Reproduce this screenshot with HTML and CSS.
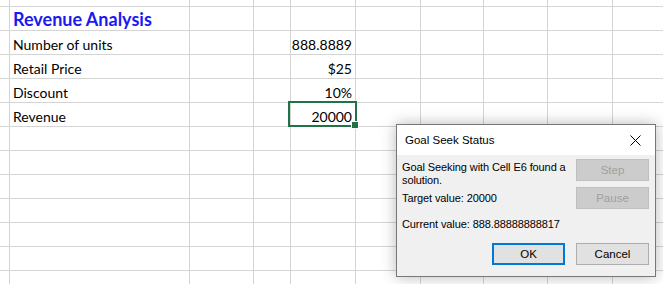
FILE: index.html
```html
<!DOCTYPE html>
<html lang="en">
<head>
    <meta charset="UTF-8">
    <title>Revenue Analysis - Goal Seek</title>
    <link rel="stylesheet" href="styles.css">
</head>
<body>
    <div class="sheet">
        <!-- row 0 (partial) -->
        <div class="cell"></div><div class="cell"></div><div class="cell"></div><div class="cell"></div><div class="cell"></div><div class="cell"></div><div class="cell"></div><div class="cell"></div><div class="cell"></div><div class="cell"></div>
        <!-- row 1 -->
        <div class="cell"></div><div class="cell title">Revenue Analysis</div><div class="cell"></div><div class="cell"></div><div class="cell"></div><div class="cell"></div><div class="cell"></div><div class="cell"></div><div class="cell"></div><div class="cell"></div>
        <!-- row 2 -->
        <div class="cell"></div><div class="cell">Number of units</div><div class="cell"></div><div class="cell"></div><div class="cell num">888.8889</div><div class="cell"></div><div class="cell"></div><div class="cell"></div><div class="cell"></div><div class="cell"></div>
        <!-- row 3 -->
        <div class="cell"></div><div class="cell">Retail Price</div><div class="cell"></div><div class="cell"></div><div class="cell num">$25</div><div class="cell"></div><div class="cell"></div><div class="cell"></div><div class="cell"></div><div class="cell"></div>
        <!-- row 4 -->
        <div class="cell"></div><div class="cell">Discount</div><div class="cell"></div><div class="cell"></div><div class="cell num">10%</div><div class="cell"></div><div class="cell"></div><div class="cell"></div><div class="cell"></div><div class="cell"></div>
        <!-- row 5 -->
        <div class="cell"></div><div class="cell">Revenue</div><div class="cell"></div><div class="cell"></div><div class="cell num active">20000<span class="selection"><span class="handle"></span></span></div><div class="cell"></div><div class="cell"></div><div class="cell"></div><div class="cell"></div><div class="cell"></div>
        <!-- empty rows -->
        <div class="cell"></div><div class="cell"></div><div class="cell"></div><div class="cell"></div><div class="cell"></div><div class="cell"></div><div class="cell"></div><div class="cell"></div><div class="cell"></div><div class="cell"></div>
        <div class="cell"></div><div class="cell"></div><div class="cell"></div><div class="cell"></div><div class="cell"></div><div class="cell"></div><div class="cell"></div><div class="cell"></div><div class="cell"></div><div class="cell"></div>
        <div class="cell"></div><div class="cell"></div><div class="cell"></div><div class="cell"></div><div class="cell"></div><div class="cell"></div><div class="cell"></div><div class="cell"></div><div class="cell"></div><div class="cell"></div>
        <div class="cell"></div><div class="cell"></div><div class="cell"></div><div class="cell"></div><div class="cell"></div><div class="cell"></div><div class="cell"></div><div class="cell"></div><div class="cell"></div><div class="cell"></div>
        <div class="cell"></div><div class="cell"></div><div class="cell"></div><div class="cell"></div><div class="cell"></div><div class="cell"></div><div class="cell"></div><div class="cell"></div><div class="cell"></div><div class="cell"></div>
        <div class="cell"></div><div class="cell"></div><div class="cell"></div><div class="cell"></div><div class="cell"></div><div class="cell"></div><div class="cell"></div><div class="cell"></div><div class="cell"></div><div class="cell"></div>
        <div class="cell"></div><div class="cell"></div><div class="cell"></div><div class="cell"></div><div class="cell"></div><div class="cell"></div><div class="cell"></div><div class="cell"></div><div class="cell"></div><div class="cell"></div>
    </div>

    <div class="dialog">
        <div class="dialog-title">
            <span>Goal Seek Status</span>
            <svg class="close" width="11" height="11" viewBox="0 0 11 11">
                <path d="M0.5 0.5 L10.5 10.5 M10.5 0.5 L0.5 10.5" stroke="#000" stroke-width="1" fill="none"/>
            </svg>
        </div>
        <div class="dialog-body">
            <div class="dialog-main">
                <div class="dialog-text">
                    <p>Goal Seeking with Cell E6 found a solution.</p>
                    <p class="target">Target value: 20000</p>
                    <p class="current">Current value: 888.88888888817</p>
                </div>
                <div class="side-buttons">
                    <button class="btn" disabled>Step</button>
                    <button class="btn" disabled>Pause</button>
                </div>
            </div>
            <div class="dialog-footer">
                <button class="btn default">OK</button>
                <button class="btn">Cancel</button>
            </div>
        </div>
    </div>
</body>
</html>
```

FILE: styles.css
```css
body {
    margin: 0;
    width: 663px;
    height: 284px;
    overflow: hidden;
    background: #fff;
    position: relative;
    font-family: Lato, "Open Sans", sans-serif;
}

.sheet {
    display: grid;
    grid-template-columns: 10px 180px 64px 37px 65px 65px 63px 64px 65px 60px;
    grid-template-rows: 7px repeat(12, 24px);
}

.cell {
    border-right: 1px solid #d4d4d4;
    border-bottom: 1px solid #d4d4d4;
    font-size: 14px;
    color: #000;
    padding: 0 3px 1px;
    display: flex;
    align-items: flex-end;
    white-space: nowrap;
    box-sizing: border-box;
}

.cell.title {
    font-size: 18px;
    font-weight: bold;
    color: #1a1af0;
    padding-bottom: 0;
}

.cell.num {
    justify-content: flex-end;
}

.cell.active {
    position: relative;
}

.selection {
    position: absolute;
    left: -3px;
    top: -2px;
    width: 69px;
    height: 26px;
    border: 2px solid #217346;
    box-sizing: border-box;
}

.handle {
    position: absolute;
    right: -4px;
    bottom: -4px;
    width: 6px;
    height: 6px;
    background: #217346;
    border: 1px solid #fff;
}

.dialog {
    position: absolute;
    left: 396px;
    top: 124px;
    width: 260px;
    height: 153px;
    box-sizing: border-box;
    border: 1px solid #777;
    background: #f0f0f0;
    box-shadow: 0 0 14px rgba(0, 0, 0, 0.28);
    display: flex;
    flex-direction: column;
    font-family: "Liberation Sans", Arial, sans-serif;
    font-size: 11px;
    color: #000;
}

.dialog-title {
    height: 30px;
    background: #fff;
    display: flex;
    align-items: center;
    justify-content: space-between;
    padding: 0 14px 0 8px;
    font-size: 11.5px;
}

.dialog-body {
    flex: 1;
    display: flex;
    flex-direction: column;
    padding: 4px 6px 11px 5px;
}

.dialog-main {
    display: flex;
    justify-content: space-between;
}

.dialog-text {
    width: 172px;
    padding-top: 2px;
    letter-spacing: -0.1px;
}

.dialog-text p {
    margin: 0;
    line-height: 13px;
}

.dialog-text .target {
    margin-top: 5px;
}

.dialog-text .current {
    margin-top: 13px;
    white-space: nowrap;
}

.side-buttons {
    display: flex;
    flex-direction: column;
    gap: 6px;
}

.btn {
    width: 73px;
    height: 22px;
    box-sizing: border-box;
    border: 1px solid #adadad;
    background: #e1e1e1;
    font-family: "Liberation Sans", Arial, sans-serif;
    font-size: 11.5px;
    color: #000;
    padding: 0;
}

.btn:disabled {
    background: #cccccc;
    border-color: #bfbfbf;
    color: #a0a0a0;
}

.btn.default {
    border: 2px solid #0078d7;
}

.dialog-footer {
    margin-top: auto;
    display: flex;
    justify-content: flex-end;
    gap: 11px;
}
```
